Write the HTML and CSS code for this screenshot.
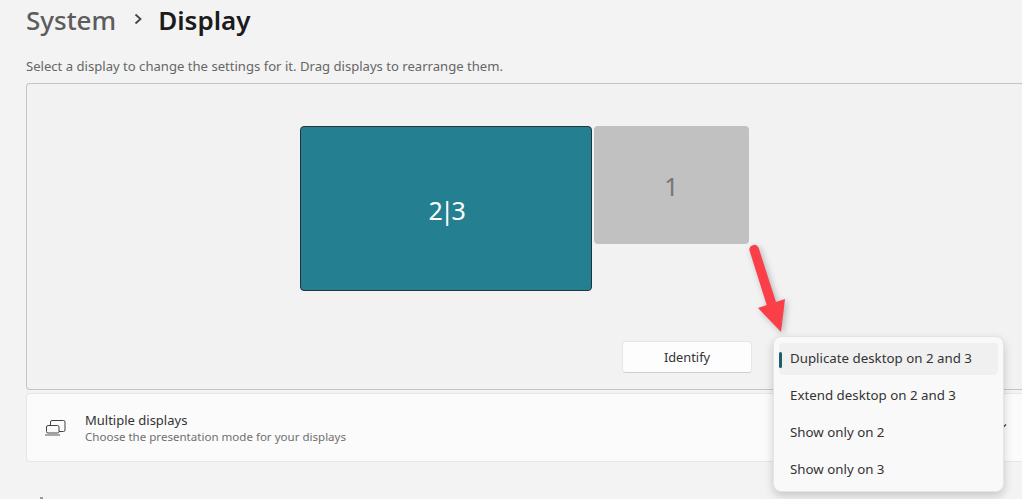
FILE: index.html
```html
<!DOCTYPE html>
<html lang="en">
<head>
    <meta charset="UTF-8">
    <meta name="viewport" content="width=device-width, initial-scale=1.0">
    <title>Display</title>
    <link rel="stylesheet" href="styles.css">
</head>
<body>
    <header class="crumbs">
        <span class="crumb-parent">System</span>
        <svg class="crumb-sep" width="10" height="12" viewBox="0 0 10 12"><path d="M2.500 1.500 7.500 6l-5 4.500" fill="none" stroke="#444" stroke-width="1.800"/></svg>
        <h1>Display</h1>
    </header>

    <p class="hint">Select a display to change the settings for it. Drag displays to rearrange them.</p>

    <section class="arrange">
        <div class="monitor monitor-active">2|3</div>
        <div class="monitor monitor-idle">1</div>
        <div class="arrange-actions">
            <button class="identify">Identify</button>
        </div>
    </section>

    <section class="setting">
        <svg class="setting-icon" width="21" height="18" viewBox="0 0 21 18">
            <path d="M5.500 6.500V3a1.500 1.500 0 0 1 1.500-1.500h11.500A1.500 1.500 0 0 1 20 3v8a1.500 1.500 0 0 1-1.500 1.500h-4.500" fill="none" stroke="#444" stroke-width="1"/>
            <rect x="1.500" y="6.500" width="12.500" height="7.500" rx="1.500" fill="none" stroke="#444" stroke-width="1"/>
            <path d="M0 16h15" stroke="#555" stroke-width="1"/>
        </svg>
        <div>
            <div class="setting-title">Multiple displays</div>
            <div class="setting-desc">Choose the presentation mode for your displays</div>
        </div>
        <svg class="setting-chevron" width="12" height="8" viewBox="0 0 12 8"><path d="M1 1.500 6 6.500l5-5" fill="none" stroke="#333" stroke-width="1.200"/></svg>
    </section>

    <div class="next-icon"></div>

    <svg class="red-arrow" width="60" height="100" viewBox="0 0 60 100">
        <path d="M4.500 10.500a4.800 4.800 0 0 1 9-3L31 62l-9 4Z" fill="#fb3f49"/>
        <path d="M13 68 40 59 36 92Z" fill="#fb3f49"/>
    </svg>

    <ul class="menu">
        <li class="menu-item menu-item-selected">Duplicate desktop on 2 and 3</li>
        <li class="menu-item">Extend desktop on 2 and 3</li>
        <li class="menu-item">Show only on 2</li>
        <li class="menu-item">Show only on 3</li>
    </ul>
</body>
</html>
```

FILE: styles.css
```css
* {
    box-sizing: border-box;
}

html, body {
    height: 100%;
}

body {
    margin: 0;
    background-color: #f3f3f3;
    color: #1b1b1b;
    font-family: 'Noto Sans', 'Open Sans', sans-serif;
    overflow: hidden;
    position: relative;
}

.crumbs {
    display: flex;
    align-items: center;
    height: 40px;
    padding-left: 26px;
    font-size: 26px;
    font-weight: 500;
}

.crumb-parent {
    color: #5c5c5c;
}

.crumb-sep {
    margin: 0 15px 2px 17px;
}

.crumbs h1 {
    margin: 0;
    font-size: 26px;
    font-weight: 600;
}

.hint {
    margin: 17px 0 0 26px;
    height: 26px;
    font-size: 13.100px;
    line-height: 18px;
    color: #666;
}

.arrange {
    position: relative;
    height: 307px;
    margin-left: 26px;
    background-color: #f2f2f2;
    border: 1px solid #c4c4c4;
    border-right: 0;
    border-radius: 4px 0 0 4px;
}

.monitor {
    position: absolute;
    display: flex;
    align-items: center;
    justify-content: center;
    border-radius: 4px;
    padding-top: 2px;
}

.monitor-active {
    left: 273px;
    top: 42px;
    width: 292px;
    height: 165px;
    background-color: #248091;
    border: 1px solid #23343c;
    color: #fff;
    font-size: 25px;
    letter-spacing: -2.500px;
}

.monitor-idle {
    left: 567px;
    top: 42px;
    width: 155px;
    height: 118px;
    background-color: #c1c1c1;
    color: #767676;
    font-size: 25px;
}

.arrange-actions {
    position: absolute;
    left: 595px;
    top: 257px;
}

.identify {
    width: 130px;
    height: 32px;
    background-color: #fdfdfd;
    border: 1px solid #e6e6e6;
    border-bottom-color: #cfcfcf;
    border-radius: 4px;
    color: #333;
    font-family: inherit;
    font-size: 12.800px;
}

.setting {
    display: flex;
    align-items: center;
    gap: 19px;
    height: 69px;
    margin: 3px 0 0 26px;
    padding-left: 18px;
    padding-right: 15px;
    background-color: #fbfbfb;
    border: 1px solid #e6e6e6;
    border-right: 0;
    border-radius: 4px 0 0 4px;
}

.setting-icon {
    flex-shrink: 0;
}

.setting-chevron {
    margin-left: auto;
    margin-top: -2px;
}

.setting-title {
    font-size: 13px;
    line-height: 18px;
    color: #333;
}

.setting-desc {
    font-size: 11.550px;
    line-height: 16px;
    color: #707070;
}

.next-icon {
    width: 3px;
    height: 2px;
    margin: 35px 0 0 40px;
    background-color: #999;
}

.red-arrow {
    position: absolute;
    left: 745px;
    top: 240px;
    filter: drop-shadow(2px 2px 3px rgba(0, 0, 0, 0.25));
}

.menu {
    position: absolute;
    left: 773px;
    top: 336px;
    width: 231px;
    height: 156px;
    margin: 0;
    padding: 6px 5px;
    list-style: none;
    background-color: #f9f9f9;
    border: 1px solid #e4e4e4;
    border-radius: 8px;
    box-shadow: 0 4px 10px rgba(0, 0, 0, 0.18);
}

.menu-item {
    position: relative;
    height: 37px;
    padding-left: 11px;
    font-size: 13.300px;
    line-height: 30px;
    color: #333;
}

.menu-item-selected {
    height: 32px;
    margin-bottom: 5px;
    background-color: #f0f0f0;
    border-radius: 4px;
}

.menu-item-selected::before {
    content: "";
    position: absolute;
    left: 0;
    top: 9px;
    width: 3px;
    height: 16px;
    background-color: #1a5f6e;
    border-radius: 2px;
}
```
